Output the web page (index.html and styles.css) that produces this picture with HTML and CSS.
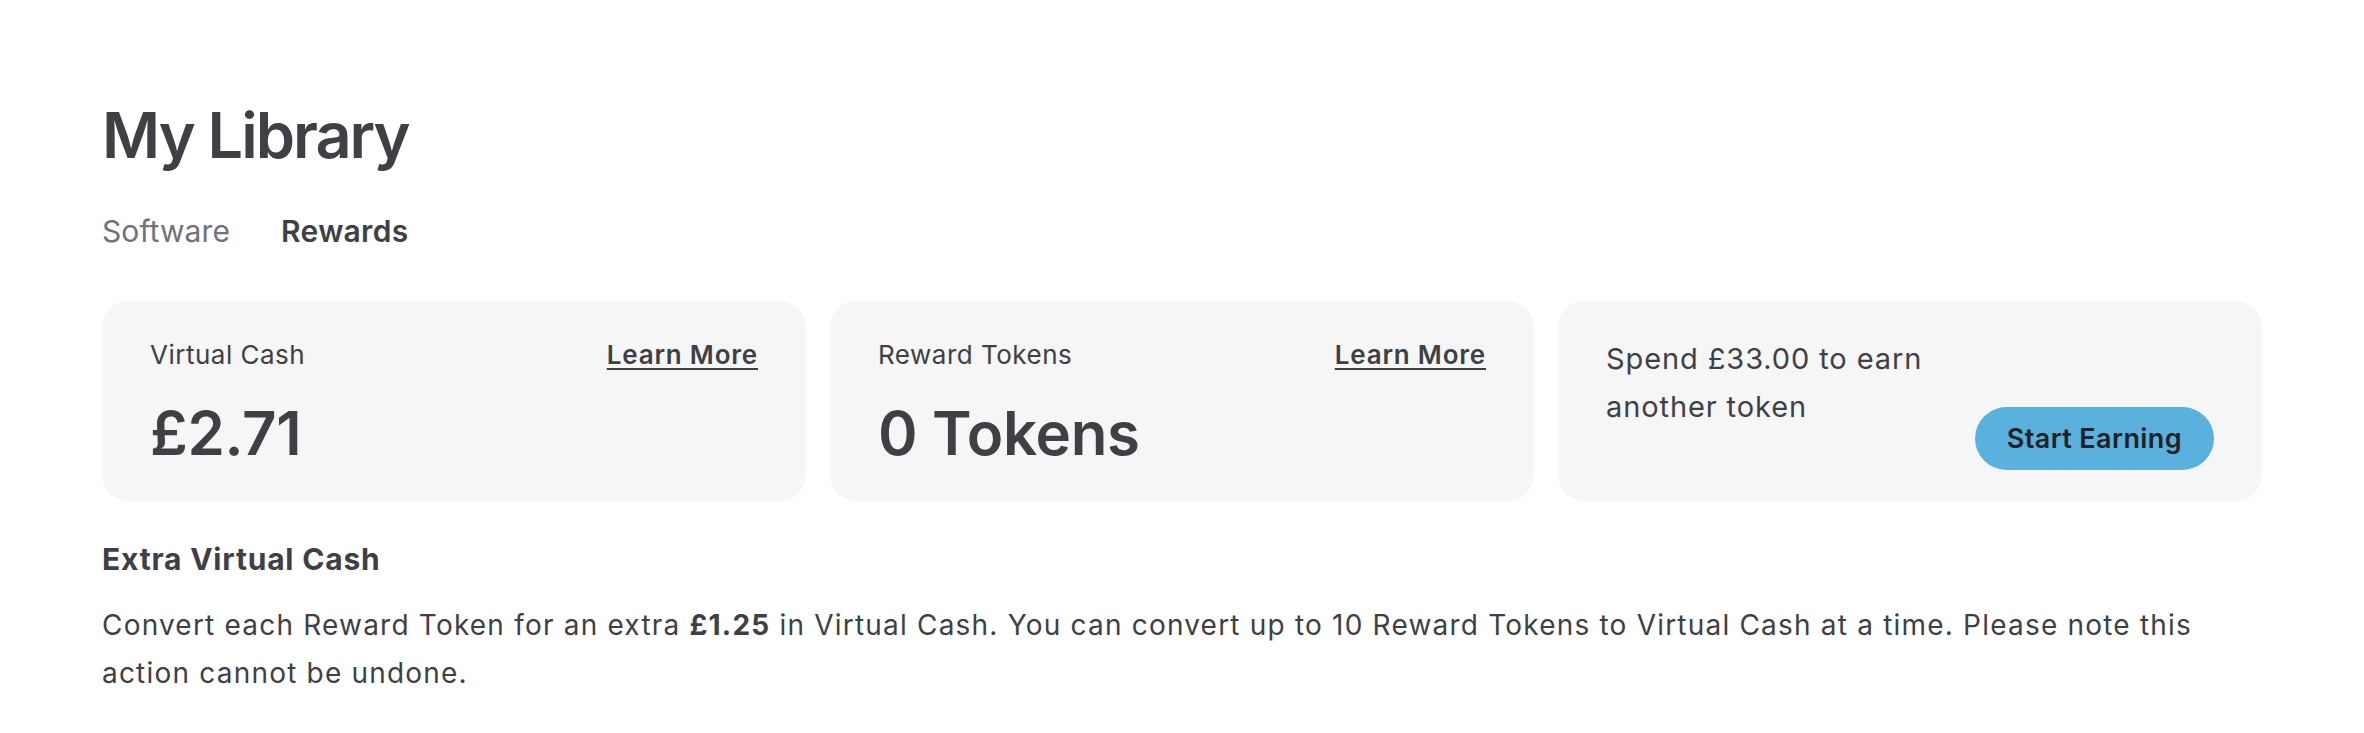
FILE: index.html
```html
<!DOCTYPE html>
<html lang="en">
<head>
<meta charset="utf-8">
<title>My Library</title>
<link rel="stylesheet" href="styles.css">
</head>
<body>
<main class="page">
  <h1 class="title">My Library</h1>
  <nav class="tabs">
    <a class="tab">Software</a>
    <a class="tab tab-active">Rewards</a>
  </nav>
  <section class="cards">
    <div class="card">
      <div class="card-head">
        <span class="card-label">Virtual Cash</span>
        <a class="learn">Learn More</a>
      </div>
      <div class="card-value">£2.71</div>
    </div>
    <div class="card">
      <div class="card-head">
        <span class="card-label">Reward Tokens</span>
        <a class="learn">Learn More</a>
      </div>
      <div class="card-value">0 Tokens</div>
    </div>
    <div class="card card-earn">
      <p class="earn-text">Spend £33.00 to earn another token</p>
      <button class="earn-btn">Start Earning</button>
    </div>
  </section>
  <h2 class="extra-title">Extra Virtual Cash</h2>
  <p class="extra-text">Convert each Reward Token for an extra <strong>£1.25</strong> in Virtual Cash. You can convert up to 10 Reward Tokens to Virtual Cash at a time. Please note this action cannot be undone.</p>
</main>
</body>
</html>
```

FILE: styles.css
```css
* { box-sizing: border-box; }
html, body { margin: 0; padding: 0; background: #ffffff; }
body {
  font-family: Inter, "Noto Sans", "Liberation Sans", sans-serif;
  color: #3f3f46;
}
.page {
  width: 2160px;
  margin-left: 102px;
  padding-top: 97px;
}
.title {
  margin: 0;
  font-size: 63px;
  line-height: 76px;
  font-weight: 600;
  color: #3f3f46;
  letter-spacing: -2px;
}
.tabs {
  display: flex;
  gap: 51px;
  margin-top: 40px;
  font-size: 30px;
  line-height: 36px;
}
.tab { color: #71717a; text-decoration: none; letter-spacing: 0.1px; }
.tab-active { color: #3f3f46; font-weight: 600; letter-spacing: 0.3px; }
.cards {
  display: grid;
  grid-template-columns: repeat(3, 1fr);
  gap: 24px;
  margin-top: 52px;
}
.card {
  background: #f6f6f6;
  border-radius: 26px;
  padding: 35px 48px 32px;
  height: 200px;
}
.card-head {
  display: flex;
  justify-content: space-between;
  align-items: baseline;
  font-size: 26px;
  line-height: 38px;
}
.card-label { color: #3f3f46; letter-spacing: 0.5px; }
.learn {
  color: #3f3f46;
  font-weight: 600;
  letter-spacing: 0.8px;
  text-decoration: underline;
  text-decoration-thickness: 2px;
  text-underline-offset: 4px;
}
.card-value {
  margin-top: 23px;
  font-size: 60px;
  line-height: 72px;
  font-weight: 600;
  color: #3f3f46;
  letter-spacing: -0.3px;
}
.card-earn {
  display: flex;
  justify-content: space-between;
  align-items: flex-end;
  padding-top: 34px;
  padding-bottom: 31px;
}
.earn-text {
  align-self: flex-start;
  margin: 0;
  max-width: 400px;
  font-size: 29px;
  line-height: 48px;
  letter-spacing: 0.9px;
  color: #3f3f46;
}
.earn-btn {
  flex: none;
  white-space: nowrap;
  height: 63px;
  padding: 0 32px;
  border: 0;
  border-radius: 32px;
  background: #5ab1de;
  color: #222226;
  font-family: inherit;
  font-size: 27px;
  font-weight: 600;
  letter-spacing: 0.4px;
}
.extra-title {
  margin: 38px 0 0;
  font-size: 30px;
  line-height: 40px;
  font-weight: 700;
  letter-spacing: 0.8px;
  color: #3f3f46;
}
.extra-text {
  margin: 22px 0 0;
  max-width: 2130px;
  font-size: 28px;
  line-height: 48px;
  letter-spacing: 1.2px;
  color: #3f3f46;
}
.extra-text strong { font-weight: 700; }
```
